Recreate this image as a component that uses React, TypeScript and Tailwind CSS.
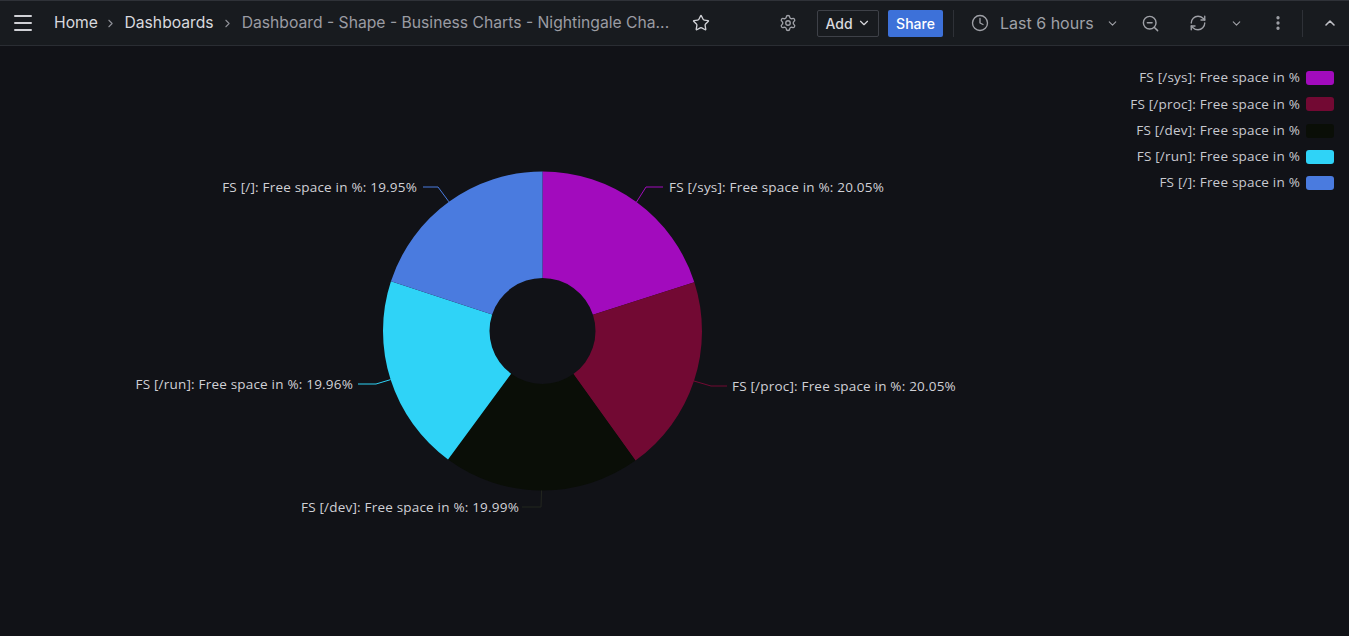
import React from "react";
import {
  Menu,
  ChevronRight,
  Star,
  Settings,
  ChevronDown,
  Clock,
  ZoomOut,
  RefreshCw,
  EllipsisVertical,
  ChevronUp,
} from "lucide-react";

const CX = 542.5;
const CY = 285;
const R = 159.5;
const RI = 53;

type Slice = { name: string; value: number; color: string; line: string };

const slices: Slice[] = [
  { name: "FS [/sys]: Free space in %", value: 20.05, color: "#a20bbd", line: "#a20bbd" },
  { name: "FS [/proc]: Free space in %", value: 20.05, color: "#720933", line: "#720933" },
  { name: "FS [/dev]: Free space in %", value: 19.99, color: "#0a0e07", line: "#23261f" },
  { name: "FS [/run]: Free space in %", value: 19.96, color: "#2fd3f7", line: "#2fd3f7" },
  { name: "FS [/]: Free space in %", value: 19.95, color: "#4a7bdf", line: "#4a7bdf" },
];

function pt(angleDeg: number, r: number) {
  const a = (angleDeg * Math.PI) / 180;
  return [CX + r * Math.sin(a), CY - r * Math.cos(a)];
}

function arcPath(a0: number, a1: number) {
  const [x0, y0] = pt(a0, R);
  const [x1, y1] = pt(a1, R);
  const [x2, y2] = pt(a1, RI);
  const [x3, y3] = pt(a0, RI);
  const large = a1 - a0 > 180 ? 1 : 0;
  return `M${x0} ${y0} A${R} ${R} 0 ${large} 1 ${x1} ${y1} L${x2} ${y2} A${RI} ${RI} 0 ${large} 0 ${x3} ${y3} Z`;
}

const total = slices.reduce((s, x) => s + x.value, 0);
let acc = 0;
const arcs = slices.map((s) => {
  const a0 = (acc / total) * 360;
  acc += s.value;
  const a1 = (acc / total) * 360;
  return { ...s, a0, a1, mid: (a0 + a1) / 2 };
});

type Label = {
  text: string;
  pts: string;
  x: number;
  y: number;
  anchor: "start" | "end";
  color: string;
};

function labelFor(i: number): Label {
  const a = arcs[i];
  const [ex, ey] = pt(a.mid, R);
  const t = `${a.name}: ${a.value.toFixed(2)}%`;
  switch (i) {
    case 0:
      return { text: t, pts: `${ex},${ey} 646,141 663,141`, x: 669, y: 142, anchor: "start", color: a.line };
    case 1:
      return { text: t, pts: `${ex},${ey} 711,340 727,340`, x: 732, y: 341, anchor: "start", color: a.line };
    case 2:
      return { text: t, pts: `${ex},${ey} 541,461 522,461`, x: 519, y: 462, anchor: "end", color: a.line };
    case 3:
      return { text: t, pts: `${ex},${ey} 376,338 358,338`, x: 353, y: 339, anchor: "end", color: a.line };
    default:
      return { text: t, pts: `${ex},${ey} 438,141 423,141`, x: 417, y: 142, anchor: "end", color: a.line };
  }
}

function Chart() {
  return (
    <svg width={1100} height={590} className="flex-none block">
      {arcs.map((a) => (
        <path key={a.name} d={arcPath(a.a0, a.a1)} fill={a.color} />
      ))}
      {arcs.map((_, i) => {
        const l = labelFor(i);
        return (
          <g key={i}>
            <polyline points={l.pts} fill="none" stroke={l.color} strokeWidth={1} />
            <text
              x={l.x}
              y={l.y}
              textAnchor={l.anchor}
              dominantBaseline="middle"
              fill="#d0d0d6"
              style={{
                fontFamily: '"Open Sans", "Noto Sans", sans-serif',
                fontSize: 13.5,
                letterSpacing: 0.2,
              }}
            >
              {l.text}
            </text>
          </g>
        );
      })}
    </svg>
  );
}

function Legend() {
  return (
    <div className="flex flex-1 flex-col items-end gap-[12.25px] pt-[25px] pr-[15px]">
      {slices.map((s) => (
        <div key={s.name} className="flex h-[14px] items-center gap-[6px]">
          <span className="font-['Open_Sans',sans-serif] text-[13.5px] leading-none tracking-[0.2px] text-[#c8c9d0]">
            {s.name}
          </span>
          <span className="h-[14px] w-[28px] rounded-[3px]" style={{ backgroundColor: s.color }} />
        </div>
      ))}
    </div>
  );
}

function Header() {
  return (
    <div className="flex h-[46px] items-center border-t border-b border-t-[#2f3238] border-b-[#2a2d33] bg-[#181b1f] font-['Inter',sans-serif]">
      <Menu className="ml-[11px] h-[24px] w-[24px] flex-none text-[#d0d1d6]" strokeWidth={2} />
      <span className="ml-[19px] text-[15.7px] text-[#d8d9de]">Home</span>
      <ChevronRight className="ml-[6.5px] mr-[7px] h-[13px] w-[13px] flex-none text-[#8e9097]" strokeWidth={2} />
      <span className="text-[15.7px] text-[#d8d9de]">Dashboards</span>
      <ChevronRight className="ml-[7px] mr-[8px] h-[13px] w-[13px] flex-none text-[#8e9097]" strokeWidth={2} />
      <span className="text-[15.7px] text-[#9b9ca3]">Dashboard - Shape - Business Charts - Nightingale Cha...</span>
      <Star className="ml-[23px] h-[18px] w-[18px] flex-none text-[#d0d1d6]" strokeWidth={1.8} />
      <div className="flex-1" />
      <Settings className="h-[18px] w-[18px] flex-none text-[#9fa1a7]" strokeWidth={1.8} />
      <div className="ml-[20px] flex h-[27px] w-[62px] flex-none items-center justify-center gap-[4px] rounded-[2px] border border-[#3e4148] text-[14px] font-medium text-[#d8d9de]">
        Add
        <ChevronDown className="h-[14px] w-[14px]" strokeWidth={2} />
      </div>
      <div className="ml-[9px] flex h-[27px] w-[55px] flex-none items-center justify-center rounded-[2px] bg-[#3d71d9] text-[14px] font-medium text-white">
        Share
      </div>
      <div className="ml-[10px] h-[27px] w-px flex-none bg-[#2e3137]" />
      <Clock className="ml-[17px] h-[18px] w-[18px] flex-none text-[#9fa1a7]" strokeWidth={1.8} />
      <span className="ml-[11px] w-[93px] flex-none whitespace-nowrap text-[16px] text-[#9fa1a7]">Last 6 hours</span>
      <ChevronDown className="ml-[12.5px] h-[13px] w-[13px] flex-none text-[#9fa1a7]" strokeWidth={2} />
      <ZoomOut className="ml-[22px] h-[19px] w-[19px] flex-none text-[#9fa1a7]" strokeWidth={1.8} />
      <RefreshCw className="ml-[29.5px] h-[18px] w-[18px] flex-none text-[#9fa1a7]" strokeWidth={1.8} />
      <ChevronDown className="ml-[22.5px] h-[13px] w-[13px] flex-none text-[#9fa1a7]" strokeWidth={2} />
      <EllipsisVertical className="ml-[26.5px] h-[18px] w-[18px] flex-none text-[#9fa1a7]" strokeWidth={2.4} />
      <div className="ml-[15px] h-[27px] w-px flex-none bg-[#2e3137]" />
      <ChevronUp className="ml-[19px] mr-[11px] h-[16px] w-[16px] flex-none text-[#c0c1c7]" strokeWidth={2.4} />
    </div>
  );
}

export default function App() {
  return (
    <div className="flex h-[636px] w-[1349px] flex-col overflow-hidden bg-[#111217]">
      <Header />
      <div className="flex flex-1">
        <Chart />
        <Legend />
      </div>
    </div>
  );
}
